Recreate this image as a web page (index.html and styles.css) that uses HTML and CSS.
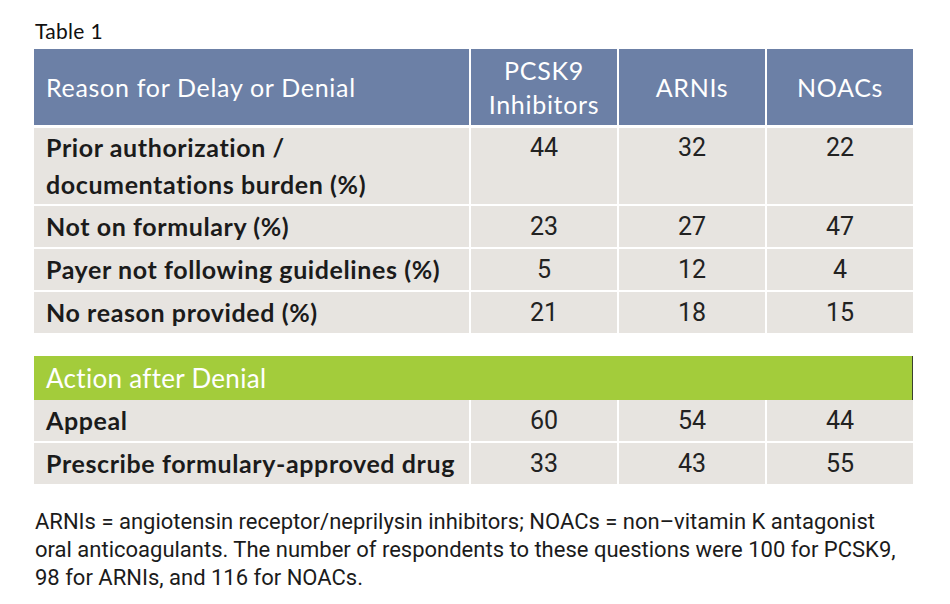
FILE: index.html
```html
<!DOCTYPE html>
<html lang="en">
<head>
<meta charset="utf-8">
<title>Table 1</title>
<link rel="stylesheet" href="styles.css">
</head>
<body>
<div class="page">
  <div class="caption">Table 1</div>
  <div class="grid reasons">
    <div class="hcell label">Reason for Delay or Denial</div>
    <div class="hcell col">PCSK9<br>Inhibitors</div>
    <div class="hcell col">ARNIs</div>
    <div class="hcell col">NOACs</div>

    <div class="cell label tall">Prior authorization /<br>documentations burden (%)</div>
    <div class="cell num tall">44</div>
    <div class="cell num tall">32</div>
    <div class="cell num tall">22</div>

    <div class="cell label">Not on formulary (%)</div>
    <div class="cell num">23</div>
    <div class="cell num">27</div>
    <div class="cell num">47</div>

    <div class="cell label">Payer not following guidelines (%)</div>
    <div class="cell num">5</div>
    <div class="cell num">12</div>
    <div class="cell num">4</div>

    <div class="cell label">No reason provided (%)</div>
    <div class="cell num">21</div>
    <div class="cell num">18</div>
    <div class="cell num">15</div>
  </div>

  <div class="grid actions">
    <div class="ghead">Action after Denial</div>

    <div class="cell label">Appeal</div>
    <div class="cell num">60</div>
    <div class="cell num">54</div>
    <div class="cell num">44</div>

    <div class="cell label">Prescribe formulary-approved drug</div>
    <div class="cell num">33</div>
    <div class="cell num">43</div>
    <div class="cell num">55</div>
  </div>

  <p class="note">ARNIs = angiotensin receptor/neprilysin inhibitors; NOACs = non–vitamin K antagonist<br>oral anticoagulants. The number of respondents to these questions were 100 for PCSK9,<br>98 for ARNIs, and 116 for NOACs.</p>
</div>
</body>
</html>
```

FILE: styles.css
```css
html, body {
  margin: 0;
  padding: 0;
  background: #ffffff;
}

.page {
  padding: 17px 0 0 34px;
  width: 879px;
  font-family: Lato, "Open Sans", sans-serif;
  color: #1b1b1b;
}

.caption {
  font-size: 21px;
  line-height: 28px;
  padding-left: 1px;
  margin-bottom: 4px;
  letter-spacing: 0.3px;
  color: #111111;
}

.grid {
  display: grid;
  grid-template-columns: 435px 146px 146px 146px;
  column-gap: 2px;
  row-gap: 2px;
}

.hcell {
  background: #6c80a6;
  color: #ffffff;
  font-size: 25px;
  letter-spacing: 0.7px;
  line-height: 34px;
  height: 76px;
  display: flex;
  align-items: center;
  margin-bottom: 1px;
}

.hcell.label {
  padding-left: 12px;
}

.hcell.col {
  justify-content: center;
  text-align: center;
}

.cell {
  background: #e7e4e0;
  font-size: 25px;
  line-height: 37px;
  padding: 2px 12px;
}

.cell.tall {
  padding-top: 1px;
  padding-bottom: 1px;
}

.cell.label {
  font-weight: 700;
  letter-spacing: 0.6px;
}

.cell.num {
  font-family: Roboto, "Liberation Sans", sans-serif;
  text-align: center;
  font-size: 25px;
  color: #222222;
}

.actions {
  margin-top: 23px;
}

.actions .ghead {
  grid-column: 1 / -1;
  background: #a3cc3b;
  color: #ffffff;
  font-size: 26px;
  letter-spacing: 0.3px;
  height: 44px;
  line-height: 44px;
  padding-left: 12px;
  margin-bottom: -2px;
  border-right: 1px solid #3a3f30;
}

.note {
  margin: 24px 0 0 1px;
  font-family: Roboto, "Liberation Sans", sans-serif;
  font-size: 22px;
  line-height: 28px;
  color: #1b1b1b;
}
```
